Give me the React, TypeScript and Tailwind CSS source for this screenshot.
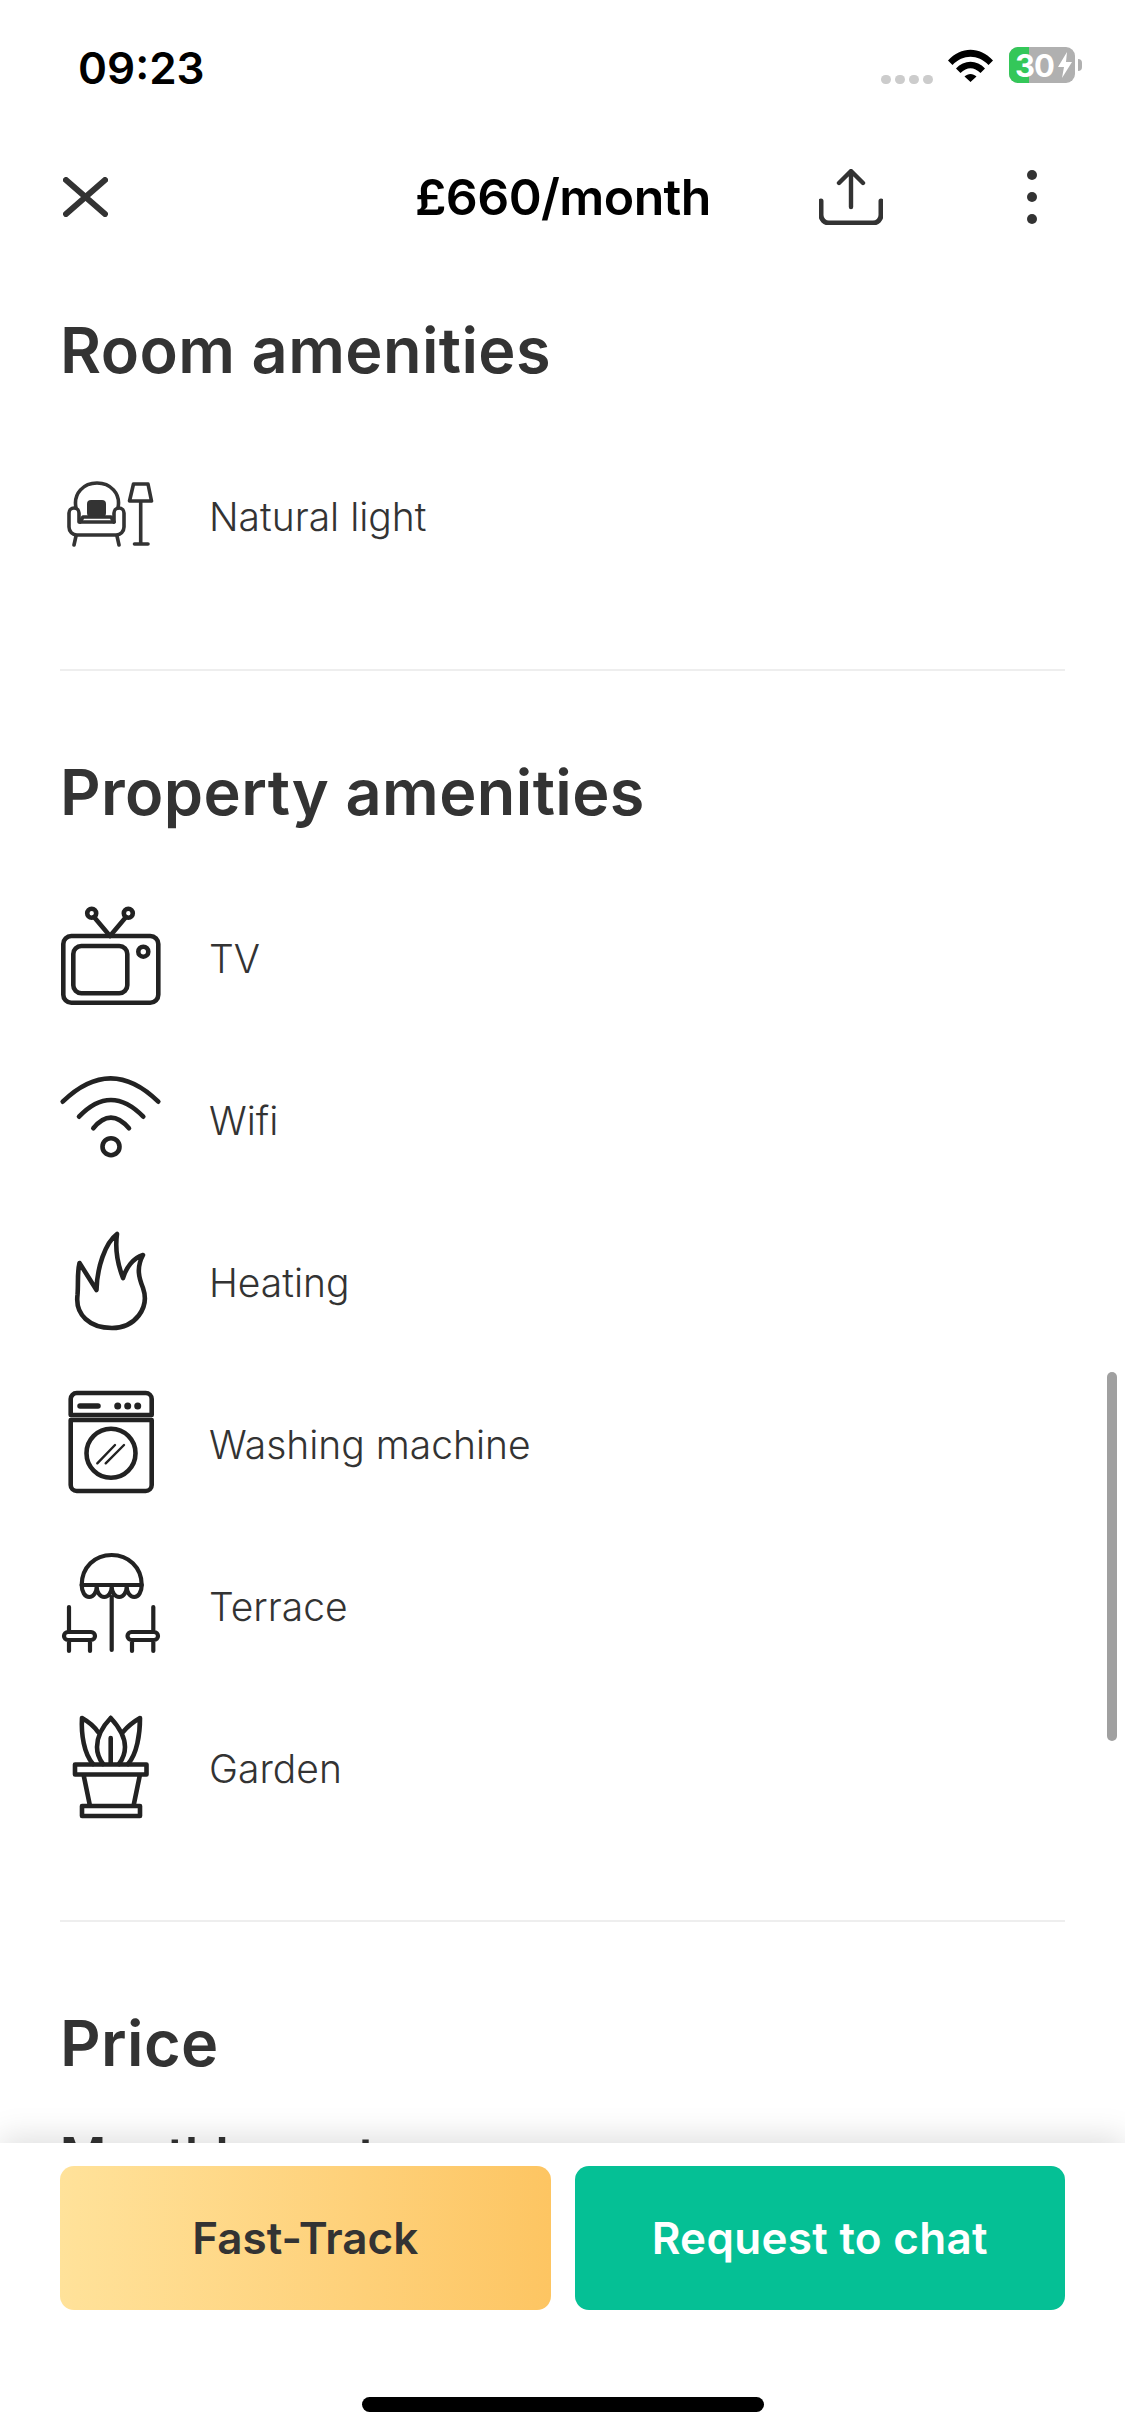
const S = ({ children, sw = 4.6 }: { children: React.ReactNode; sw?: number }) => (
  <svg viewBox="0 0 100 100" className="w-[100px] h-[100px] shrink-0 overflow-visible" fill="none" stroke="#222" strokeWidth={sw} strokeLinecap="round" strokeLinejoin="round">
    {children}
  </svg>
);

const Chair = () => (
  <S sw={3.6}>
    <path d="M16 41C13 26 24 16 37 16C50 16 61 26 58 41" stroke="#333" />
    <path d="M9 46a5 5 0 0 1 10 0V55H54V46a5 5 0 0 1 10 0V60a8 8 0 0 1-8 8H17a8 8 0 0 1-8-8Z" stroke="#333" />
    <rect x="27" y="33" width="19" height="17" rx="4" fill="#333" stroke="none" />
    <path d="M20 55l3-5H51l3 5M16 69l-2 9M57 69l2 9M73.5 17H88L91.5 34H69.5ZM80.7 34V76M74.5 77H88" stroke="#333" />
  </S>
);
const Tv = () => (
  <S>
    <rect x="3.3" y="27" width="95" height="66.7" rx="8" />
    <rect x="13.3" y="37" width="54" height="47.3" rx="8" />
    <circle cx="83.3" cy="42.7" r="5" />
    <path d="M50 27L34 8M50 27L66 8" />
    <circle cx="31.7" cy="4.3" r="4.5" />
    <circle cx="68.3" cy="4.3" r="4.5" />
  </S>
);
const Wifi = () => (
  <S>
    <path d="M2.7 30.7Q50.7-16 98.3 30.7M19 45.7Q50.7 12.3 83.3 45.7M33.3 57.3Q50.7 36 69 57.3" />
    <circle cx="51" cy="75.7" r="8.5" />
  </S>
);
const Flame = () => (
  <S>
    <path d="M19.5 30L36.5 57C37 35 45 10 57 1C55 15 58 32 63 45C66 35 73 25 83 22C76 35 79 45 83 55C90 75 75 95 52 95C30 95 15 82 17.5 62C18.5 50 17 40 19.5 30Z" />
  </S>
);
const Washer = () => (
  <S>
    <path d="M10.7 20V4a6 6 0 0 1 6-6H85.7a6 6 0 0 1 6 6V20ZM10.7 25H91.7V90a6 6 0 0 1-6 6H16.7a6 6 0 0 1-6-6Z" />
    <path d="M20 11H38" strokeWidth={5.5} />
    <circle cx="57.7" cy="11" r="3.5" fill="#222" stroke="none" />
    <circle cx="67.7" cy="11" r="3.5" fill="#222" stroke="none" />
    <circle cx="77.7" cy="11" r="3.5" fill="#222" stroke="none" />
    <circle cx="51" cy="58.3" r="24.5" />
    <path d="M37.3 68.3L55 50M45.7 68.3L64 50" strokeWidth={2.4} />
  </S>
);
const Terrace = () => (
  <S sw={4.2}>
    <path d="M21.7 28C21.7 10 35-2 51.7-2C68-2 81.7 10 81.7 28" />
    <path d="M21.7 28H81.7M21.7 28C21.7 35 25 40 29.2 40C33.5 40 36.7 35 36.7 30C36.7 35 40 40 44.2 40C48.5 40 51.7 35 51.7 30C51.7 35 55 40 59.2 40C63.5 40 66.7 35 66.7 30C66.7 35 70 40 74.2 40C78.5 40 81.7 35 81.7 28M51.7 40V93" />
    <path d="M9 50V75M30 83V94M9 83V94M8 75H31a4 4 0 0 1 0 8H8a4 4 0 0 1 0-8ZM93.3 50V75M72 83V94M93.3 83V94M71.5 75H94a4 4 0 0 1 0 8H71.5a4 4 0 0 1 0-8Z" />
  </S>
);
const Plant = () => (
  <S sw={4.6}>
    <path d="M15 45.5H86.5V55.5H15ZM23.5 55.5L30 87H73.5L80 55.5M22 87H80V97H22ZM50.7 19V44" />
    <path d="M50.7-1C42 8 37 17 37 28C37 36 40 41 43 45M50.7-1C59 8 65 17 65 28C65 36 62 41 59 45" />
    <path d="M33 45C24 35 21 15 22-1C29 3 34 7 38 13M68 45C77 35 80 15 80-1C73 3 68 7 63 13" />
  </S>
);

const Row = ({ icon, label }: { icon: React.ReactNode; label: string }) => (
  <div className="flex items-center h-[162px] gap-[49px]">
    {icon}
    <span className="text-[39px] font-light text-[#333]">{label}</span>
  </div>
);

const Heading = ({ children }: { children: React.ReactNode }) => (
  <h2 className="text-[63px] leading-[72px] font-semibold text-[#333] tracking-[0.4px]">{children}</h2>
);

export default function App() {
  return (
    <div className="relative w-[1125px] h-[2436px] overflow-hidden bg-white font-['Inter',sans-serif]">
      <div className="flex items-center justify-between h-[130px] pl-[78px] pr-[43px]">
        <span className="text-[44px] font-semibold text-black mt-[6px]">09:23</span>
        <div className="flex items-center">
          <div className="flex gap-[4px] mt-[28px] mr-[15px]">
            <i className="w-[10px] h-[9px] rounded-full bg-[#ccc]" />
            <i className="w-[10px] h-[9px] rounded-full bg-[#ccc]" />
            <i className="w-[10px] h-[9px] rounded-full bg-[#ccc]" />
            <i className="w-[10px] h-[9px] rounded-full bg-[#ccc]" />
          </div>
          <svg viewBox="0 0 45 33" className="w-[45px] h-[33px] mr-[16px]">
            <path d="M0 11.5C13-3 32-3 45 11.5L40.5 16C30 5 15 5 4.5 16Z M8 19.5C16 10.5 29 10.5 37 19.5L32.5 24C26 17.5 19 17.5 12.5 24Z M16.5 27.5C20 24 25 24 28.5 27.5L22.5 33Z" fill="#000" />
          </svg>
          <div className="relative flex items-center justify-center w-[66px] h-[36px] rounded-[9px] overflow-hidden bg-[#b0b0b0]">
            <div className="absolute left-0 top-0 bottom-0 w-[20px] bg-[#34c759]" />
            <span className="relative text-[31px] leading-none font-bold text-white mr-[15px] tracking-[-1px]">30</span>
            <svg viewBox="0 0 14 26" className="absolute right-[3px] top-[5px] w-[14px] h-[26px]">
              <path d="M9 0L0 15H6L4 26L14 10H8Z" fill="#fff" />
            </svg>
          </div>
          <div className="w-[4px] h-[12px] ml-[3px] rounded-r-full bg-[#b0b0b0]" />
        </div>
      </div>

      <div className="relative flex items-center justify-between h-[134px] pl-[63px] pr-[88px]">
        <svg viewBox="0 0 45 40" className="w-[45px] h-[40px]" fill="none" stroke="#333" strokeWidth={6} strokeLinecap="round">
          <path d="M3 3L42 37M42 3L3 37" />
        </svg>
        <span className="absolute left-[415px] text-[50px] font-semibold text-black tracking-[-0.6px]">£660/month</span>
        <div className="flex items-center gap-[144px]">
          <svg viewBox="0 0 64 56" className="w-[64px] h-[56px]" fill="none" stroke="#333" strokeWidth={4.4} strokeLinecap="round" strokeLinejoin="round">
            <path d="M32 38V3M20 14L32 2L44 14" />
            <path d="M2 32V46a8 8 0 0 0 8 8H54a8 8 0 0 0 8-8V32" strokeWidth={5} />
          </svg>
          <div className="flex flex-col gap-[12px]">
            <i className="w-[10px] h-[10px] rounded-full bg-[#333]" />
            <i className="w-[10px] h-[10px] rounded-full bg-[#333]" />
            <i className="w-[10px] h-[10px] rounded-full bg-[#333]" />
          </div>
        </div>
      </div>

      <div className="px-[60px]">
        <div className="pt-[50px] pb-[71px] border-b-2 border-[#eee]">
          <div className="mb-[50px]"><Heading>Room amenities</Heading></div>
          <Row icon={<Chair />} label="Natural light" />
        </div>
        <div className="pt-[85px] pb-[70px] border-b-2 border-[#eee]">
          <div className="mb-[50px]"><Heading>Property amenities</Heading></div>
          <Row icon={<Tv />} label="TV" />
          <Row icon={<Wifi />} label="Wifi" />
          <Row icon={<Flame />} label="Heating" />
          <Row icon={<Washer />} label="Washing machine" />
          <Row icon={<Terrace />} label="Terrace" />
          <Row icon={<Plant />} label="Garden" />
        </div>
        <div className="pt-[85px]">
          <Heading>Price</Heading>
          <div className="mt-[49px] text-[50px] leading-[54px] font-semibold text-[#333]">Monthly cost</div>
        </div>
      </div>

      <div className="absolute right-[8px] top-[1372px] w-[10px] h-[369px] rounded-full bg-[#a0a0a0]" />

      <div className="absolute left-0 right-0 bottom-0 h-[293px] bg-white shadow-[0_-6px_30px_rgba(0,0,0,0.13)]">
        <div className="flex gap-[24px] px-[60px] pt-[23px]">
          <button className="flex-1 h-[144px] rounded-[14px] bg-gradient-to-r from-[#ffe29a] to-[#fdc562] text-[44px] font-semibold text-[#333]">Fast-Track</button>
          <button className="flex-1 h-[144px] rounded-[14px] bg-[#05c095] text-[44px] font-semibold text-white tracking-[0.3px]">Request to chat</button>
        </div>
        <div className="w-[402px] h-[15px] mx-auto mt-[87px] rounded-full bg-black" />
      </div>
    </div>
  );
}
